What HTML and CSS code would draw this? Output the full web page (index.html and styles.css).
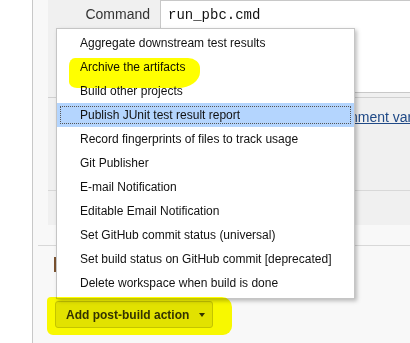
FILE: index.html
```html
<!DOCTYPE html>
<html>
<head>
  <meta charset="UTF-8">
  <title>Post-build Actions</title>
  <link rel="stylesheet" href="styles.css">
</head>
<body>
  <div class="page">
    <div class="step">
      <div class="handle"></div>
      <div class="step-body">
        <div class="field">
          <label class="field-label">Command</label>
          <div class="command-box">run_pbc.cmd</div>
        </div>
        <div class="help-row"><a href="#">See the list of available environment variables</a></div>
        <div class="step-footer"></div>
      </div>
    </div>

    <div class="post-build">
      <div class="section-mark"></div>
      <button class="add-btn">Add post-build action <span class="caret"></span></button>
    </div>

    <ul class="menu">
      <li>Aggregate downstream test results</li>
      <li>Archive the artifacts</li>
      <li>Build other projects</li>
      <li class="active">Publish JUnit test result report</li>
      <li>Record fingerprints of files to track usage</li>
      <li>Git Publisher</li>
      <li>E-mail Notification</li>
      <li>Editable Email Notification</li>
      <li>Set GitHub commit status (universal)</li>
      <li>Set build status on GitHub commit [deprecated]</li>
      <li>Delete workspace when build is done</li>
    </ul>

    <div class="marker marker-archive"></div>
    <div class="marker marker-button"></div>
  </div>
</body>
</html>
```

FILE: styles.css
```css
body { margin: 0; background: #fff; font-family: "Liberation Sans", Arial, sans-serif; color: #333; }
.page { position: relative; margin-left: 32px; border-left: 1px solid #c8c8c8; background: #f8f8f8; height: 343px; overflow: hidden; }

.step { display: flex; margin-left: 15px; height: 225px; }
.handle { width: 5px; background: #dedede; }
.step-body { flex: 1; background: #f0f0f0; display: flex; flex-direction: column; }

.field { display: flex; height: 93px; }
.field-label { width: 112px; box-sizing: border-box; padding: 6px 10px 0 0; text-align: right; font-size: 14px; line-height: 16px; color: #333; }
.command-box { flex: 1; background: #fff; border: 1px solid #c8c8c8; border-right: none; padding: 6px 7px; font: 14px/16px "Liberation Mono", "Courier New", monospace; color: #111; }

.help-row { margin-top: 4px; border-top: 1px solid #d0d0d0; height: 93px; box-sizing: border-box; padding: 11px 0 0 116px; font-size: 14px; line-height: 16px; white-space: nowrap; overflow: hidden; }
.help-row a { color: #204a87; }
.step-footer { flex: 1; border-top: 1px solid #d8d8d8; }

.post-build { margin: 20px 0 0 5px; border-top: 1px solid #d8d8d8; padding: 11px 0 0 16px; }
.section-mark { width: 3px; height: 15px; background: #7a5230; }
.add-btn { margin: 29px 0 0 1px; height: 27px; padding: 0 7px 0 10px; border: 1px solid #c4c4c4; border-radius: 3px; background: #e2e2e2; font: bold 12px "Liberation Sans", Arial, sans-serif; color: #333; display: flex; align-items: center; }
.caret { margin-left: 10px; border-left: 3.5px solid transparent; border-right: 3.5px solid transparent; border-top: 4px solid #333; }

.menu { position: absolute; left: 23px; top: 28px; width: 299px; box-sizing: border-box; margin: 0; padding: 2px 0 3px; list-style: none; background: #fff; border: 1px solid #c5c5c5; box-shadow: 2px 2px 4px rgba(0, 0, 0, 0.25); }
.menu li { height: 24px; line-height: 24px; padding-left: 23px; font-size: 12px; color: #111; }
.menu li.active { background: #b4d5fe; outline: 1px dotted #555; outline-offset: -4px; }

.marker { position: absolute; background: #ffff00; mix-blend-mode: multiply; }
.marker-archive { left: 36px; top: 58px; width: 131px; height: 30px; border-radius: 6px 12px 22px 8px / 8px 10px 16px 6px; }
.marker-button { left: 14px; top: 297px; width: 185px; height: 38px; border-radius: 4px 10px 9px 6px; }
```
